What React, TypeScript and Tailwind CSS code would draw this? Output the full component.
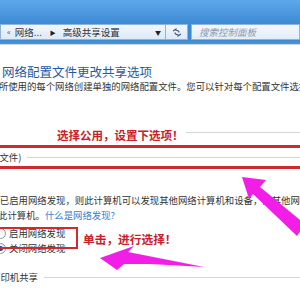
import React from "react";

const F = { fontFamily: '"Noto Sans CJK SC", "Noto Sans", sans-serif' };

function Radio({ checked }: { checked?: boolean }) {
  return (
    <span className="relative inline-flex h-[11px] w-[11px] shrink-0 items-center justify-center rounded-full border border-[#8a97a8] bg-gradient-to-b from-[#e9eef5] to-white">
      {checked && <span className="h-[5px] w-[5px] rounded-full bg-[#1f4e8a]" />}
    </span>
  );
}

export default function App() {
  return (
    <div className="relative h-[300px] w-[300px] overflow-hidden bg-white" style={F}>
      {/* title bar */}
      <div className="h-[24px] bg-gradient-to-b from-[#5ea8ea] to-[#3d8ad4]" />
      {/* address row */}
      <div className="flex h-[16px] items-stretch bg-[#3d8ad4]">
        <div className="flex w-[166px] items-center border border-[#8fb3d9] bg-gradient-to-b from-[#f2f7fd] to-[#dde9f6] text-[9.5px] text-[#333]">
          <span className="ml-[6px] text-[8px] text-[#555]">«</span>
          <span className="ml-[4px]">网络...</span>
          <span className="ml-[8px] text-[6px] text-[#222]">▶</span>
          <span className="ml-[7px]">高级共享设置</span>
          <span className="ml-auto mr-[4px] text-[6px] text-[#222]">▼</span>
        </div>
        <div className="flex w-[22px] items-center justify-center border border-l-0 border-[#8fb3d9] bg-gradient-to-b from-[#f2f7fd] to-[#dde9f6]">
          <svg width="10" height="9" viewBox="0 0 10 9">
            <path d="M1 3 L4 1 L4 2.3 Q7 2.3 7 4.5" fill="none" stroke="#3c5a80" strokeWidth="1.1" />
            <path d="M9 6 L6 8 L6 6.7 Q3 6.7 3 4.5" fill="none" stroke="#3c5a80" strokeWidth="1.1" />
          </svg>
        </div>
        <div className="ml-[3px] flex flex-1 items-center border border-[#8fb3d9] bg-gradient-to-b from-[#f4f8fd] to-[#e3edf8] pl-[7px] text-[9.5px] italic text-[#8a9ab0]">
          搜索控制面板
        </div>
      </div>
      <div className="h-[5px] bg-gradient-to-b from-[#3d8ad4] to-[#4a94d8] border-b border-[#c9d9ea]" />

      {/* content */}
      <div className="flex flex-col">
        <div className="mt-[20px] ml-[2px] whitespace-nowrap text-[12.5px] leading-[14px] text-[#1e5aa6]">
          网络配置文件更改共享选项
        </div>
        <div className="-ml-[20px] whitespace-nowrap text-[9.4px] leading-[14px] text-[#333]">
          为您所使用的每个网络创建单独的网络配置文件。您可以针对每个配置文件选择特定的选项。
        </div>

        {/* section header with line */}
        <div className="mt-[32px] flex h-[10px] items-end">
          <div className="mb-[2px] ml-[186px] h-px flex-1 bg-[#d6d6d6]" />
        </div>

        {/* current profile row */}
        <div className="mt-[16px] flex h-[12px] items-center">
          <span className="-ml-[10px] whitespace-nowrap text-[9.4px] text-[#333]">置文件)</span>
          <div className="ml-[6px] h-px flex-1 bg-[#d6d6d6]" />
        </div>

        <div className="mt-[30px] -ml-[19px] whitespace-nowrap text-[9.4px] leading-[15px] text-[#333]">
          如果已启用网络发现，则此计算机可以发现其他网络计算机和设备，而其他网络计算机也可以发现
        </div>
        <div className="-ml-[2px] whitespace-nowrap text-[9.4px] leading-[15px] text-[#333]">
          此计算机。<span className="text-[#3a7cd0]">什么是网络发现?</span>
        </div>

        <div className="mt-[3px] -ml-[5px] flex h-[15px] items-center gap-[2px]">
          <Radio />
          <span className="ml-[1px] whitespace-nowrap text-[9.4px] text-[#333]">启用网络发现</span>
        </div>
        <div className="-ml-[5px] flex h-[15px] items-center gap-[2px]">
          <Radio checked />
          <span className="ml-[1px] whitespace-nowrap text-[9.4px] text-[#333]">关闭网络发现</span>
        </div>

        <div className="mt-[15px] flex h-[12px] items-center">
          <span className="-ml-[9px] whitespace-nowrap text-[9.4px] text-[#333]">打印机共享</span>
          <div className="ml-[6px] h-px flex-1 bg-[#d6d6d6]" />
        </div>
      </div>

      {/* annotations */}
      <div className="absolute left-[57px] top-[128px] whitespace-nowrap text-[11.5px] font-bold leading-[14px] text-[#c8202a]">
        选择公用，设置下选项！
      </div>
      <div className="absolute left-0 right-0 top-[145px] h-[3px] bg-[#d02a30]" />
      <div className="absolute left-0 right-0 top-[166px] h-[3px] bg-[#d02a30]" />
      <div className="absolute -left-[10px] top-[227px] h-[22px] w-[88px] border-[2.5px] border-[#d02a30]" />
      <div className="absolute left-[83px] top-[232px] whitespace-nowrap text-[11.7px] font-bold leading-[14px] text-[#c8202a]">
        单击，进行选择！
      </div>

      <svg className="absolute left-0 top-0" width="300" height="300" viewBox="0 0 300 300">
        <polygon
          points="242,177 266,180 260,187 305,224 297,236 253,194 249,199"
          fill="#f21ee8"
        />
        <polygon
          points="100,258 134,246 128,252 204,267 150,264 124,264 117,270"
          fill="#f21ee8"
        />
      </svg>
    </div>
  );
}
